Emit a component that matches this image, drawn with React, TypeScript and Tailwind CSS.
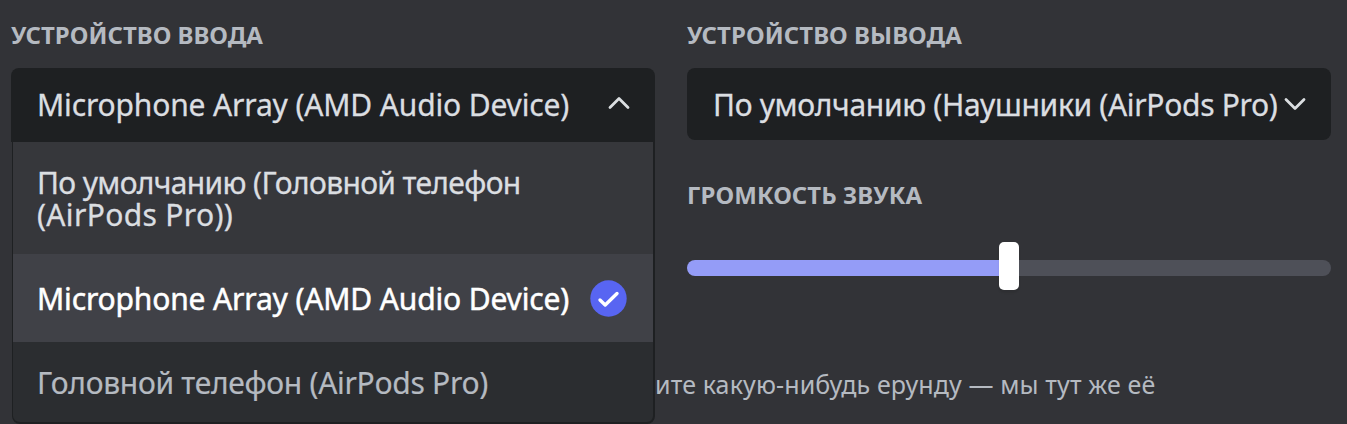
import type { ReactNode } from "react";

function Label({ children, className }: { children: ReactNode; className: string }) {
  return (
    <h5 className={`h-8 whitespace-nowrap text-2xl leading-[30px] font-bold text-[#b5bac1] ${className}`}>
      {children}
    </h5>
  );
}

function Chevron({ up = false }: { up?: boolean }) {
  return (
    <svg width="24" height="14" viewBox="0 0 24 14" fill="none" className="shrink-0">
      <path
        d={up ? "M3 11.5L12 2.5L21 11.5" : "M3 2.5L12 11.5L21 2.5"}
        stroke="#dbdee1"
        strokeWidth="2.8"
        strokeLinecap="round"
        strokeLinejoin="round"
      />
    </svg>
  );
}

function CheckBadge() {
  return (
    <svg width="37" height="37" viewBox="0 0 37 37" fill="none" className="shrink-0">
      <circle cx="18.5" cy="18.5" r="18.2" fill="#5865f2" />
      <path d="M10 20L15.2 25L27 13.5" stroke="#fff" strokeWidth="3.4" strokeLinecap="round" strokeLinejoin="round" />
    </svg>
  );
}

export default function App() {
  return (
    <div className="relative h-[424px] w-[1347px] overflow-hidden bg-[#323337] font-['Noto_Sans',sans-serif] text-[30px] text-[#dbdee1]">
      <div className="grid grid-cols-[644px_644px] gap-8 pl-[11px] pt-5">
        <section>
          <Label className="tracking-[0px]">УСТРОЙСТВО ВВОДА</Label>
          <div className="relative mt-4">
            <div className="flex h-[74px] items-center justify-between rounded-t-lg bg-[#1e2022] pr-6 pb-1 pl-[26px]">
              <span className="mt-0.5 whitespace-nowrap tracking-[-0.15px] [-webkit-text-stroke:0.3px]">
                Microphone Array (AMD Audio Device)
              </span>
              <Chevron up />
            </div>
            <ul className="absolute top-[73px] left-px z-10 w-[643px] overflow-hidden rounded-b-lg border-2 border-t border-l-[1.5px] border-[#1e2022] bg-[#2b2d30]">
              <li className="h-[112px] bg-[#36373b] pt-[25px] pl-6 leading-8 whitespace-nowrap [-webkit-text-stroke:0.3px]">
                <div className="tracking-[-0.65px]">По умолчанию (Головной телефон</div>
                <div className="tracking-[0.35px]">(AirPods Pro))</div>
              </li>
              <li className="flex h-[88px] items-center justify-between bg-[#404147] pr-[26px] pl-6 whitespace-nowrap text-white">
                <span className="mt-px tracking-[-0.15px] [-webkit-text-stroke:0.5px]">Microphone Array (AMD Audio Device)</span>
                <CheckBadge />
              </li>
              <li className="h-[80px] pt-[25px] pl-6 leading-8 tracking-[-0.29px] whitespace-nowrap text-[#b5bac1] [-webkit-text-stroke:0.2px]">
                Головной телефон (AirPods Pro)
              </li>
            </ul>
          </div>
        </section>
        <section>
          <Label className="tracking-[0.05px]">УСТРОЙСТВО ВЫВОДА</Label>
          <div className="mt-4 flex h-[72px] items-center justify-between rounded-lg bg-[#1e2022] pr-6 pl-[26px]">
            <span className="w-[568px] overflow-hidden whitespace-nowrap tracking-[-0.32px] [-webkit-text-stroke:0.3px]">
              По умолчанию (Наушники (AirPods Pro)
            </span>
            <Chevron />
          </div>
          <Label className="mt-10 tracking-[0.05px]">ГРОМКОСТЬ ЗВУКА</Label>
          <div className="mt-[30px] flex h-12 items-center">
            <div className="mt-1 h-4 w-[312px] rounded-l-full bg-[#949cf7]" />
            <div className="h-12 w-5 rounded-[5px] bg-white shadow-[0_3px_2px_rgba(0,0,0,0.08)]" />
            <div className="mt-1 h-4 w-[312px] rounded-r-full bg-[#4e5058]" />
          </div>
        </section>
      </div>
      <p className="mt-[78px] pl-[655px] text-[25px] leading-8 tracking-[0.13px] whitespace-nowrap text-[#b5bac1]">
        ите какую-нибудь ерунду — мы тут же её
      </p>
    </div>
  );
}
